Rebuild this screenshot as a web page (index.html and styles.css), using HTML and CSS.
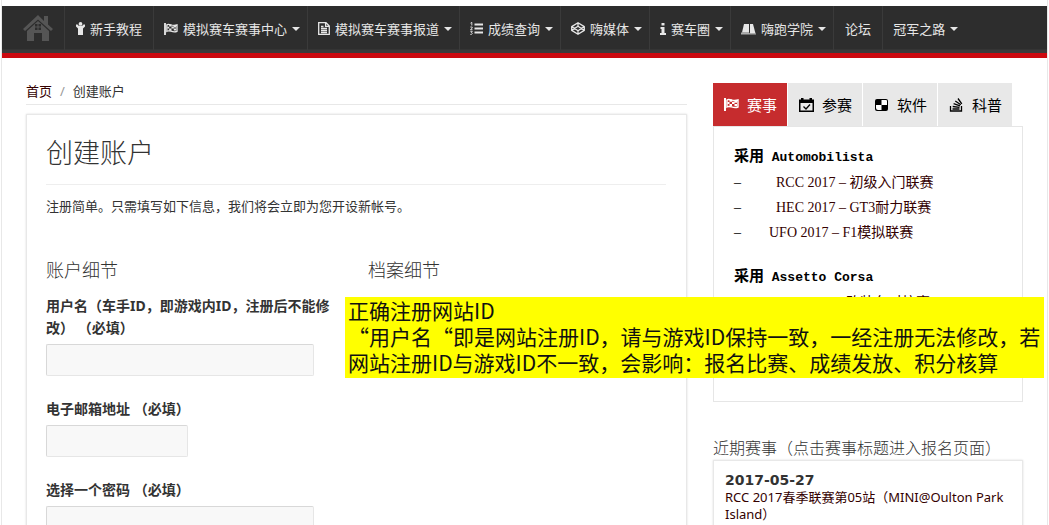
FILE: index.html
```html
<!DOCTYPE html>
<html lang="zh-CN">
<head>
<meta charset="utf-8">
<title>创建账户</title>
<link rel="stylesheet" href="styles.css">
</head>
<body>
<div class="page">
  <nav class="nav">
    <a class="nav-home" href="#" aria-label="首页">
      <svg width="30" height="27" viewBox="0 0 30 27" fill="currentColor"><path d="M15 0L0 14l2 2L15 4.500l13 11.500 2-2-5-4.500V1h-4v5z"/><path fill-rule="evenodd" d="M15 6L4 16v10h7v-8h8v8h7V16zM12 9v2.500h2.500V9zm3.500 0v2.500H18V9zM12 12.500V15h2.500v-2.500zm3.500 0V15H18v-2.500z"/></svg>
    </a>
    <a class="nav-item nav-plain" href="#">
      <svg width="9" height="13" viewBox="0 0 9 13" fill="currentColor"><circle cx="4.500" cy="1.900" r="1.900"/><path d="M0 2.500h1.500L3 4h3l1.500-1.500H9v2L7 6.500V13H2V6.500L0 4.500z"/></svg>
      <span>新手教程</span>
    </a>
    <a class="nav-item" href="#">
      <svg width="14" height="12" viewBox="0 0 15 13"><use href="#flag"/></svg>
      <span>模拟赛车赛事中心</span><i class="caret"></i>
    </a>
    <a class="nav-item" href="#">
      <svg width="12" height="13" viewBox="0 0 12 13" fill="none" stroke="currentColor" stroke-width="1.300"><path d="M.7.700H8l3.300 3.300v8.300H.7zM7.600.700v3.700h3.700M3 6.500h6M3 8.500h6M3 10.500h6M3 4.500h2.500"/></svg>
      <span>模拟赛车赛事报道</span><i class="caret"></i>
    </a>
    <a class="nav-item" href="#">
      <svg width="13" height="13" viewBox="0 0 13 13" fill="currentColor"><path d="M4.500 1.500H13v2H4.500zM4.500 5.500H13v2H4.500zM4.500 9.500H13v2H4.500z"/><path d="M.5 1.200L1.800.300V3.500M.3 5h1.900v1L.5 7.700h2M.3 9.300h2l-1 1.200c1.500 0 1.200 1.900-.2 1.900H.3" fill="none" stroke="currentColor" stroke-width=".9"/></svg>
      <span>成绩查询</span><i class="caret"></i>
    </a>
    <a class="nav-item" href="#">
      <svg width="14" height="13" viewBox="0 0 14 13" fill="none" stroke="currentColor" stroke-width="1.300" stroke-linejoin="round"><path d="M7 .700l6.300 3.900v3.800L7 12.300.7 8.400V4.600zM7 .700v3.600M7 12.300V8.700M.7 4.600L7 8.700l6.300-4.100M.7 8.400L7 4.300l6.300 4.100"/></svg>
      <span>嗨媒体</span><i class="caret"></i>
    </a>
    <a class="nav-item" href="#">
      <svg width="6" height="12" viewBox="0 0 6 12" fill="currentColor"><path d="M1.500 0h3v2.500h-3zM.5 4h4v6H6v2H0v-2h1.500V6H.5z"/></svg>
      <span>赛车圈</span><i class="caret"></i>
    </a>
    <a class="nav-item" href="#">
      <svg width="15" height="12" viewBox="0 0 15 12" fill="currentColor"><path d="M3 1h5v8.500H1z"/><path d="M9 1h3l2.500 9.500H9z"/><path d="M0 9.500h8l1 1h6v1H0z" opacity=".7"/></svg>
      <span>嗨跑学院</span><i class="caret"></i>
    </a>
    <a class="nav-item nav-plain" href="#"><span>论坛</span></a>
    <a class="nav-item nav-last" href="#"><span>冠军之路</span><i class="caret"></i></a>
  </nav>

  <div class="columns">
    <main>
      <div class="crumbs"><a href="#">首页</a><span class="slash">/</span><span>创建账户</span></div>
      <section class="card">
        <h1>创建账户</h1>
        <p class="intro">注册简单。只需填写如下信息，我们将会立即为您开设新帐号。</p>
        <form class="form">
          <div>
            <h2>账户细节</h2>
            <div class="field">
              <label for="user">用户名（车手ID，即游戏内ID，注册后不能修改） （必填）</label>
              <input id="user" class="wide" type="text">
            </div>
            <div class="field">
              <label for="email">电子邮箱地址 （必填）</label>
              <input id="email" class="short" type="email">
            </div>
            <div class="field">
              <label for="pass">选择一个密码 （必填）</label>
              <input id="pass" class="wide" type="password">
            </div>
          </div>
          <div>
            <h2>档案细节</h2>
          </div>
        </form>
      </section>
    </main>

    <aside>
      <div class="tabs">
        <button class="tab active" type="button">
          <svg width="15" height="13" viewBox="0 0 15 13"><use href="#flag"/></svg>赛事
        </button>
        <button class="tab" type="button">
          <svg width="15" height="15" viewBox="0 0 15 15"><path fill="currentColor" fill-rule="evenodd" d="M0 2.500h2V1h2.500v1.500h6V1H13v1.500h2V15H0zM1.500 6v7.500h12V6z"/><path d="M4.500 9.500L7 12l4-4.500" fill="none" stroke="currentColor" stroke-width="1.300"/></svg>参赛
        </button>
        <button class="tab" type="button">
          <svg width="15" height="15" viewBox="0 0 15 15"><rect x="1" y="2" width="13" height="12" rx="2" fill="currentColor"/><path d="M7.500 3H12q1 0 1 1v4H7.500zM7.500 8v5H4q-2 0-2-2V8z" fill="#fff"/></svg>软件
        </button>
        <button class="tab" type="button">
          <svg width="15" height="15" viewBox="0 0 15 15" fill="none" stroke="currentColor" stroke-width="1.300"><path d="M1.500 9v5h11V9M3.500 12h7M3.700 9.500l6.800.8M4.600 6.700l6.400 2.200M6.300 4l5.500 3.800M9 1.500l3.800 5.300"/></svg>科普
        </button>
      </div>
      <div class="panel">
        <h3>采用 <span class="mono">Automobilista</span></h3>
        <ul>
          <li>–&nbsp;&nbsp;&nbsp;&nbsp;&nbsp;&nbsp;&nbsp;&nbsp;&nbsp;&nbsp;<a href="#">RCC 2017 – 初级入门联赛</a></li>
          <li>–&nbsp;&nbsp;&nbsp;&nbsp;&nbsp;&nbsp;&nbsp;&nbsp;&nbsp;&nbsp;<a href="#">HEC 2017 – GT3耐力联赛</a></li>
          <li>–&nbsp;&nbsp;&nbsp;&nbsp;&nbsp;&nbsp;&nbsp;&nbsp;<a href="#">UFO 2017 – F1模拟联赛</a></li>
        </ul>
        <h3>采用 <span class="mono">Assetto Corsa</span></h3>
        <ul>
          <li class="indent"><a href="#">2017 – 改装车对抗赛</a></li>
        </ul>
      </div>
      <h4>近期赛事（点击赛事标题进入报名页面）</h4>
      <div class="events">
        <strong>2017-05-27</strong>
        <a href="#">RCC 2017春季联赛第05站（MINI@Oulton Park Island）</a>
      </div>
    </aside>
  </div>
</div>

<div class="note">正确注册网站ID<br>“用户名“即是网站注册ID，请与游戏ID保持一致，一经注册无法修改，若<br>网站注册ID与游戏ID不一致，会影响：报名比赛、成绩发放、积分核算</div>

<svg class="defs" aria-hidden="true">
  <symbol id="flag" viewBox="0 0 15 13">
    <path fill="currentColor" d="M0 0h2v13H0z"/>
    <path d="M3 2c3-2 5 2 11 0v7c-5 2-8-2-11 0z" fill="none" stroke="currentColor" stroke-width="1.400"/>
    <path fill="currentColor" d="M5.500 1.500h2.500v2.300H5.500zM8 3.800h2.500V6H8zM10.500 2.500H13v2.300h-2.500zM3.500 4h2v2h-2zM5.500 6H8v2.500H5.500zM10.500 6H13v2h-2.500z"/>
  </symbol>
</svg>
</body>
</html>
```
FILE: styles.css
```css
* { box-sizing: border-box; }

body {
  margin: 0;
  height: 100vh;
  overflow: hidden;
  position: relative;
  background: #fff;
  color: #333;
  font: 13px/22px "Noto Sans", "Noto Sans CJK SC", sans-serif;
}

a { color: inherit; text-decoration: none; }
h1, h2, h3, h4, p, ul { margin: 0; padding: 0; }
ul { list-style: none; }

.page {
  margin: 0 1px;
  padding-top: 6px;
  min-height: 100vh;
  border: solid #e8e8e8;
  border-width: 0 1px;
}

.nav {
  display: flex;
  height: 52px;
  background: linear-gradient(#2d2d2d 43px, #3b3b3b 44px);
  border-bottom: 5px solid #cc0a10;
  color: #e6e6e6;
}
.nav-home {
  width: 63px;
  padding: 9px 0 0 21px;
  border-right: 1px solid #3a3a3a;
  color: #555;
}
.nav-item {
  display: flex;
  align-items: center;
  gap: 5px;
  padding: 0 7px 2px 10px;
  border-right: 1px solid #3a3a3a;
  white-space: nowrap;
}
.nav-plain { padding-left: 11px; padding-right: 11px; }
.nav-last { border-right: 0; }
.caret {
  border: solid transparent;
  border-width: 4px 4px 0;
  border-top-color: #e6e6e6;
}

.columns {
  display: grid;
  grid-template-columns: minmax(0, 1fr) 310px;
  gap: 26px;
  padding: 25px 24px 0;
}

.crumbs {
  height: 22px;
  line-height: 16px;
  border-bottom: 1px solid #e8e8e8;
}
.crumbs a { color: #300; }
.slash { margin: 0 8px; color: #999; }

.card {
  margin-top: 9px;
  padding: 0 20px 60px 19px;
  border: 1px solid #e8e8e8;
  box-shadow: 0 0 2px #ddd;
}
.card h1 {
  padding: 19px 0 13px;
  border-bottom: 1px solid #eee;
  font-size: 27px;
  font-weight: 300;
  line-height: 37px;
}
.intro { padding-top: 10px; }

.form {
  display: grid;
  grid-template-columns: 1fr 1fr;
  gap: 24px;
  padding-top: 40px;
}
.form h2 {
  font-size: 18px;
  font-weight: 300;
  line-height: 26px;
  padding-bottom: 12px;
}
.field { margin-bottom: 22px; }
.field label {
  display: block;
  font-size: 14px;
  font-weight: 700;
  line-height: 22px;
}
.field input {
  display: block;
  height: 32px;
  margin-top: 5px;
  border: 1px solid #e6e6e6;
  border-top-color: #d8d8d8;
  border-left-color: #d8d8d8;
  border-radius: 2px;
  background: #f8f8f8;
}
.wide { width: 90%; }
.short { width: 142px; }

.tabs { display: flex; gap: 1px; }
.tab {
  display: flex;
  align-items: center;
  gap: 8px;
  height: 43px;
  padding: 0 10px 0 11px;
  border: 0;
  background: #e8e8e8;
  color: #000;
  font: 15px/20px "Noto Sans CJK SC", sans-serif;
}
.tab.active { background: #c62c2e; color: #fff; }

.panel {
  min-height: 276px;
  padding: 17px 20px;
  border: 1px solid #e6e6e6;
  font: 14px/25px "Liberation Serif", "Noto Sans CJK SC", serif;
  color: #000;
}
.panel h3 { font-size: 15px; line-height: 25px; }
.panel ul { padding-bottom: 19px; }
.panel a { color: #300; }
.mono { font-family: "Liberation Mono", monospace; font-size: 13px; margin-left: 4px; }
.indent { padding-left: 70px; }

aside h4 {
  padding-top: 35px;
  padding-bottom: 1px;
  font-size: 16px;
  font-weight: 300;
  line-height: 22px;
}
.events {
  padding: 11px 11px 40px;
  border: 1px solid #e8e8e8;
  box-shadow: 0 0 2px #ddd;
  line-height: 17px;
}
.events strong {
  display: block;
  font-family: "DejaVu Sans", sans-serif;
  font-size: 14px;
}
.events a { color: #300; }

.note {
  position: absolute;
  top: 297px;
  left: 345px;
  right: 5px;
  padding: 0 3px 3px;
  background: #ff0;
  color: #111;
  font: 21px/26px "Noto Sans CJK SC", sans-serif;
  white-space: nowrap;
}

.defs { position: absolute; width: 0; height: 0; }
```
